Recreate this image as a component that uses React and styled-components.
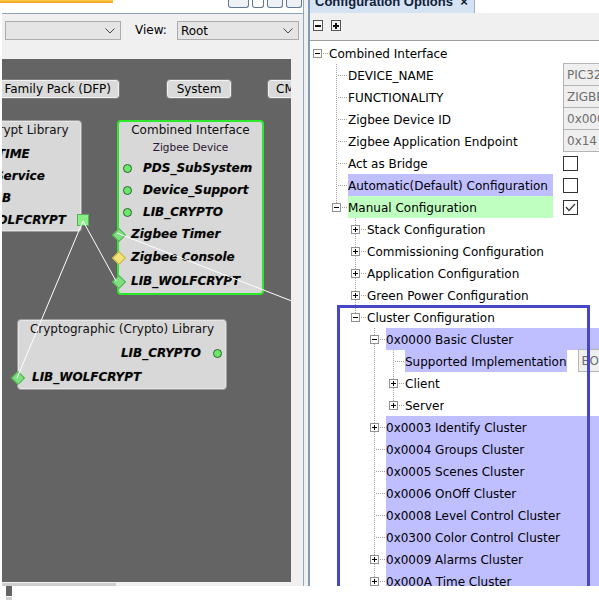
import React from 'react';
import styled, { createGlobalStyle } from 'styled-components';

const GlobalStyle = createGlobalStyle`
  html, body { margin: 0; padding: 0; background: #fff; }
  body { font-family: "DejaVu Sans", Verdana, sans-serif; font-size: 12px; color: #000; }
`;

const HL_BLUE = '#bfbfff';
const HL_GREEN = '#bfffbf';

// ---------- tree data ----------
const cluster = (label, more) => ({ label, hl: HL_BLUE, w: 'fill', ...more });

const TREE = [
  {
    label: 'Combined Interface', open: true, children: [
      { label: 'DEVICE_NAME', w: 205, field: 'PIC32CX1012BZ25048' },
      { label: 'FUNCTIONALITY', w: 205, field: 'ZIGBEE_COMBINED_INTERFACE' },
      { label: 'Zigbee Device ID', w: 205, field: '0x0007' },
      { label: 'Zigbee Application Endpoint', w: 205, field: '0x14' },
      { label: 'Act as Bridge', w: 205, check: false },
      { label: 'Automatic(Default) Configuration', w: 205, check: false, hl: HL_BLUE },
      {
        label: 'Manual Configuration', w: 205, check: true, hl: HL_GREEN, open: true, children: [
          { label: 'Stack Configuration', children: [] },
          { label: 'Commissioning Configuration', children: [] },
          { label: 'Application Configuration', children: [] },
          { label: 'Green Power Configuration', children: [] },
          {
            label: 'Cluster Configuration', open: true, children: [
              cluster('0x0000 Basic Cluster', {
                open: true, children: [
                  { label: 'Supported Implementation', hl: HL_BLUE, field: 'BOTH', ml: 11 },
                  { label: 'Client', children: [] },
                  { label: 'Server', children: [] },
                ],
              }),
              cluster('0x0003 Identify Cluster', { children: [] }),
              cluster('0x0004 Groups Cluster'),
              cluster('0x0005 Scenes Cluster'),
              cluster('0x0006 OnOff Cluster'),
              cluster('0x0008 Level Control Cluster'),
              cluster('0x0300 Color Control Cluster'),
              cluster('0x0009 Alarms Cluster', { children: [] }),
              cluster('0x000A Time Cluster', { children: [] }),
              cluster('0x0019 OTAU Cluster', { children: [] }),
            ],
          },
        ],
      },
    ],
  },
];

function flatten(nodes, depth, trail, out) {
  nodes.forEach((n, i) => {
    const last = i === nodes.length - 1;
    out.push({ ...n, depth, last, trail });
    if (n.open && n.children) flatten(n.children, depth + 1, [...trail, !last], out);
  });
  return out;
}

const ROWS = flatten(TREE, 0, [], []);

// ---------- layout ----------
const Screen = styled.div`
  width: 599px;
  height: 600px;
  overflow: hidden;
  display: flex;
  flex-direction: column;
  background: #fff;
`;

const Main = styled.div`
  display: flex;
  height: 586px;
`;

const LeftPanel = styled.div`
  width: 301px;
  margin-left: 2px;
  display: flex;
  flex-direction: column;
  background: #f0f0f0;
`;

const TitleStrip = styled.div`
  height: 13px;
  background: #fff;
  border-bottom: 1px solid #8da3bd;
  display: flex;
  align-items: flex-start;
  gap: 3px;
  padding-right: 1px;
`;

const OrangeTab = styled.div`
  width: 113px;
  height: 3px;
  margin-left: -2px;
  margin-right: auto;
  background: linear-gradient(#ffcf4a, #f39c1f);
`;

const WinButton = styled.div`
  width: ${p => p.$w}px;
  height: 8px;
  box-sizing: border-box;
  border: 1px solid #5f7893;
  border-top: none;
  border-radius: 0 0 3px 3px;
  background: ${p => (p.$light ? '#ffffff' : '#eef1f5')};
`;

const Toolbar = styled.div`
  height: 45px;
  box-sizing: border-box;
  padding: 7px 0 0 3px;
  display: flex;
  align-items: flex-start;
`;

const Select = styled.div`
  width: ${p => p.$w}px;
  height: 19px;
  box-sizing: border-box;
  margin-left: ${p => p.$ml || 0}px;
  border: 1px solid #acacac;
  background: #e5e5e5;
  display: flex;
  align-items: center;
  justify-content: space-between;
  padding: 0 5px 0 3px;
  font-size: 12px;
`;

const ViewLabel = styled.div`
  margin-left: 14px;
  line-height: 19px;
  font-size: 12px;
`;

const Canvas = styled.div`
  position: relative;
  width: 289px;
  height: 523px;
  background: #646464;
  overflow: hidden;
`;

const HScroll = styled.div`
  height: 4px;
  padding-top: 1px;
  box-sizing: border-box;
`;

const Thumb = styled.div`
  width: 114px;
  height: 3px;
  background: #cdcdcd;
`;

const Splitter = styled.div`
  width: 7px;
  box-sizing: border-box;
  border-left: 1px solid #93a8c0;
  border-right: 2px solid #7f9db9;
  background: #f0f0f0;
`;

const RightPanel = styled.div`
  flex: 1;
  min-width: 0;
  display: flex;
  flex-direction: column;
`;

const TabStrip = styled.div`
  height: 13px;
  background: #fff;
  display: flex;
  overflow: hidden;
`;

const Tab = styled.div`
  width: 165px;
  background: #d5e2f2;
  border-right: 1px solid #9db0c8;
  font-family: "Liberation Sans", Arial, sans-serif;
  font-weight: bold;
  font-size: 13px;
  line-height: 15px;
  color: #10203a;
  padding-left: 5px;
  margin-top: -6px;
  height: 19px;
  white-space: nowrap;
  box-sizing: border-box;
`;

const RToolbar = styled.div`
  height: 28px;
  box-sizing: border-box;
  background: #f0f0f0;
  border-bottom: 1px solid #a0a0a0;
  padding: 7px 0 0 3px;
  display: flex;
  gap: 8px;
`;

const ToolBtn = styled.div`
  width: 10px;
  height: 11px;
  box-sizing: border-box;
  border: 1px solid #555;
  background: #f8f8f8;
  display: flex;
  align-items: center;
  justify-content: center;
`;

const TreeArea = styled.div`
  flex: 1;
  position: relative;
  background: #fff;
  overflow: hidden;
  padding-top: 1px;
`;

const Row = styled.div`
  display: flex;
  align-items: center;
  height: 22px;
`;

const Label = styled.div`
  height: 22px;
  box-sizing: border-box;
  padding-top: 2px;
  line-height: 20px;
  white-space: nowrap;
  overflow: hidden;
  background: ${p => p.$hl || 'transparent'};
  ${p => (p.$w === 'fill' ? 'flex: 1 0 auto;' : p.$w ? `flex: none; width: ${p.$w}px;` : 'flex: none;')}
`;

const Field = styled.div`
  flex: none;
  width: 90px;
  align-self: flex-start;
  margin-top: -1px;
  margin-left: ${p => p.$ml}px;
  height: 23px;
  box-sizing: border-box;
  border: 1px solid #b4b4b4;
  background: #efefef;
  color: #6d6d6d;
  padding-left: 3px;
  line-height: 22px;
  white-space: nowrap;
  overflow: hidden;
`;

const Check = styled.div`
  flex: none;
  width: 15px;
  height: 15px;
  margin-left: 10px;
  box-sizing: border-box;
  border: 1px solid #333;
  background: #fff;
  display: flex;
  align-items: center;
  justify-content: center;
`;

const Annotation = styled.div`
  position: absolute;
  left: 27px;
  top: 264px;
  width: 253px;
  height: 340px;
  box-sizing: border-box;
  border: 3px solid #4646c8;
  pointer-events: none;
`;

const BottomStrip = styled.div`
  height: 14px;
  padding-left: 6px;
  display: flex;
  flex-direction: column;
  gap: 1px;
`;

const Mark = styled.div`
  width: 6px;
  height: ${p => p.$h}px;
  background: ${p => p.$c};
`;

// ---------- canvas parts ----------
const Node = styled.div`
  position: absolute;
  left: ${p => p.$x}px;
  top: ${p => p.$y}px;
  width: ${p => p.$w}px;
  box-sizing: border-box;
  background: #d8d8d8;
  border: ${p => (p.$active ? '2px solid #2ee82e' : '1px solid #9c9c9c')};
  border-radius: 4px;
  box-shadow: ${p => (p.$active ? 'none' : 'inset 0 0 0 1px #e6e6e6')};
`;

const NodeTitle = styled.div`
  height: ${p => p.$h || 18}px;
  line-height: ${p => p.$h || 18}px;
  text-align: center;
  white-space: nowrap;
  margin-bottom: ${p => p.$gap || 0}px;
  color: #111;
`;

const NodeSub = styled.div`
  height: 19px;
  line-height: 19px;
  text-align: center;
  font-size: 10.5px;
  color: #2a1630;
`;

const Port = styled.div`
  position: relative;
  height: ${p => p.$h || 22}px;
  display: flex;
  align-items: center;
  justify-content: ${p => (p.$right ? 'flex-end' : 'flex-start')};
  padding: 0 ${p => p.$pr || 0}px 0 ${p => p.$pl || 0}px;
  font-weight: bold;
  font-style: italic;
  white-space: nowrap;
  color: #050505;
  text-shadow: 0 0 1px rgba(0, 0, 0, 0.25);
`;

const Dot = styled.span`
  flex: none;
  width: 9px;
  height: 9px;
  box-sizing: border-box;
  border-radius: 50%;
  background: #6ae86a;
  border: 1px solid #2f5f2f;
  margin: ${p => (p.$after ? '0 0 0 12px' : '0 11px 0 0')};
`;

const Diamond = styled.span`
  position: absolute;
  left: -5px;
  top: 50%;
  width: 8px;
  height: 8px;
  margin-top: -4px;
  transform: rotate(45deg);
  background: ${p => (p.$yellow ? '#f2e27a' : '#7ee07e')};
  border: 1px solid ${p => (p.$yellow ? '#c8b040' : '#4fae4f')};
`;

const Square = styled.span`
  position: absolute;
  right: -8px;
  top: 50%;
  margin-top: -6px;
  width: 12px;
  height: 12px;
  box-sizing: border-box;
  background: #86f086;
  border: 1px solid #5cae5c;
`;

const PackButton = styled.div`
  position: absolute;
  top: 20px;
  ${p => (p.$right !== undefined ? `right: ${p.$right}px;` : `left: ${p.$x}px;`)}
  ${p => (p.$w ? `width: ${p.$w}px;` : '')}
  height: 20px;
  box-sizing: border-box;
  padding: 0 8px;
  border: 1px solid #7c7c7c;
  box-shadow: inset 0 0 0 1px #f2f2f2;
  border-radius: 4px;
  background: #dadada;
  line-height: 19px;
  text-align: center;
  white-space: nowrap;
`;

const Wires = styled.svg`
  position: absolute;
  left: 0;
  top: 0;
  pointer-events: none;
`;

// ---------- pieces ----------
const Chevron = () => (
  <svg width="10" height="6" viewBox="0 0 10 6">
    <polyline points="0.5,0.5 5,5 9.5,0.5" fill="none" stroke="#444" strokeWidth="1" />
  </svg>
);

const Guides = ({ depth, last, trail, kids, open }) => {
  const w = 19 + 19 * depth;
  const hc = 7 + 19 * depth + 0.5;
  const dot = { stroke: '#a0a0a0', strokeWidth: 1, strokeDasharray: '1 1' };
  const parts = [];
  for (let k = 1; k < depth; k++) {
    if (trail[k]) parts.push(<line key={`v${k}`} x1={7 + 19 * k + 0.5} x2={7 + 19 * k + 0.5} y1={0} y2={22} {...dot} />);
  }
  if (depth > 0) {
    parts.push(<line key="up" x1={hc} x2={hc} y1={0} y2={kids ? 7 : 11} {...dot} />);
    if (!last) parts.push(<line key="dn" x1={hc} x2={hc} y1={kids ? 16 : 12} y2={22} {...dot} />);
  }
  parts.push(<line key="h" x1={kids ? hc + 5 : hc + 1} x2={w - 1} y1={11.5} y2={11.5} {...dot} />);
  if (kids) {
    parts.push(<rect key="box" x={hc - 4} y={7.5} width={8} height={8} fill="#fff" stroke="#919191" />);
    parts.push(<line key="m" x1={hc - 2.5} x2={hc + 2.5} y1={11.5} y2={11.5} stroke="#000" />);
    if (!open) parts.push(<line key="p" x1={hc} x2={hc} y1={9} y2={14} stroke="#000" />);
  }
  return (
    <svg width={w} height={22} style={{ flex: 'none', display: 'block' }} shapeRendering="crispEdges">
      {parts}
    </svg>
  );
};

const TreeRow = ({ row }) => (
  <Row>
    <Guides depth={row.depth} last={row.last} trail={row.trail} kids={!!row.children} open={row.open} />
    <Label $hl={row.hl} $w={row.w}>{row.label}</Label>
    {row.field && <Field $ml={row.ml || 10}>{row.field}</Field>}
    {row.check !== undefined && (
      <Check>
        {row.check && (
          <svg width="11" height="9" viewBox="0 0 11 9">
            <polyline points="1,4 4,7.5 10,1" fill="none" stroke="#333" strokeWidth="1.2" />
          </svg>
        )}
      </Check>
    )}
  </Row>
);

const ToolIcon = ({ plus }) => (
  <ToolBtn>
    <svg width="8" height="8" viewBox="0 0 8 8">
      <rect x="1" y="3" width="6" height="2" fill="#111" />
      {plus && <rect x="3" y="1" width="2" height="6" fill="#111" />}
    </svg>
  </ToolBtn>
);

export default function App() {
  return (
    <>
      <GlobalStyle />
      <Screen>
        <Main>
          <LeftPanel>
            <TitleStrip>
              <OrangeTab />
              <WinButton $w={21} />
              <WinButton $w={12} $light />
              <WinButton $w={16} />
              <WinButton $w={16} />
            </TitleStrip>
            <Toolbar>
              <Select $w={116}>
                <span />
                <Chevron />
              </Select>
              <ViewLabel>View:</ViewLabel>
              <Select $w={122} $ml={10}>
                <span>Root</span>
                <Chevron />
              </Select>
            </Toolbar>
            <Canvas>
              <PackButton $right={171}>Device Family Pack (DFP)</PackButton>
              <PackButton $x={164} $w={66}>System</PackButton>
              <PackButton $x={265}>CMSIS Pack</PackButton>

              <Node $x={-50} $y={61} $w={130}>
                <NodeTitle $gap={4}>wolfCrypt Library</NodeTitle>
                <Port $pl={12}><Diamond />SYS_TIME</Port>
                <Port $pl={12}><Diamond />TCP Service</Port>
                <Port $pl={1}><Diamond />LIB_ZLIB</Port>
                <Port $right $pr={15}>LIB_WOLFCRYPT<Square /></Port>
              </Node>

              <Node $x={115} $y={61} $w={147} $active>
                <NodeTitle $h={16}>Combined Interface</NodeTitle>
                <NodeSub>Zigbee Device</NodeSub>
                <Port $pl={4}><Dot />PDS_SubSystem</Port>
                <Port $pl={4}><Dot />Device_Support</Port>
                <Port $pl={4}><Dot />LIB_CRYPTO</Port>
                <Port $pl={12}><Diamond />Zigbee Timer</Port>
                <Port $pl={12} $h={24}><Diamond $yellow />Zigbee Console</Port>
                <Port $pl={12} $h={24}><Diamond />LIB_WOLFCRYPT</Port>
              </Node>

              <Node $x={15} $y={260} $w={210}>
                <NodeTitle $gap={4}>Cryptographic (Crypto) Library</NodeTitle>
                <Port $right $pr={4}>LIB_CRYPTO<Dot $after /></Port>
                <Port $pl={14} $h={25}><Diamond />LIB_WOLFCRYPT</Port>
              </Node>

              <Wires width="289" height="523">
                <line x1="81" y1="162" x2="15" y2="319" stroke="#fff" strokeWidth="1" />
                <line x1="81" y1="162" x2="114" y2="222" stroke="#fff" strokeWidth="1" />
                <line x1="115" y1="174" x2="300" y2="246" stroke="#fff" strokeWidth="1" />
              </Wires>
            </Canvas>
            <HScroll>
              <Thumb />
            </HScroll>
          </LeftPanel>

          <Splitter />

          <RightPanel>
            <TabStrip>
              <Tab>Configuration Options&nbsp;&nbsp;×</Tab>
            </TabStrip>
            <RToolbar>
              <ToolIcon />
              <ToolIcon plus />
            </RToolbar>
            <TreeArea>
              {ROWS.map((r, i) => (
                <TreeRow key={i} row={r} />
              ))}
              <Annotation />
            </TreeArea>
          </RightPanel>
        </Main>
        <BottomStrip>
          <Mark $h={10} $c="#646464" />
          <Mark $h={3} $c="#d0d0d0" />
        </BottomStrip>
      </Screen>
    </>
  );
}
